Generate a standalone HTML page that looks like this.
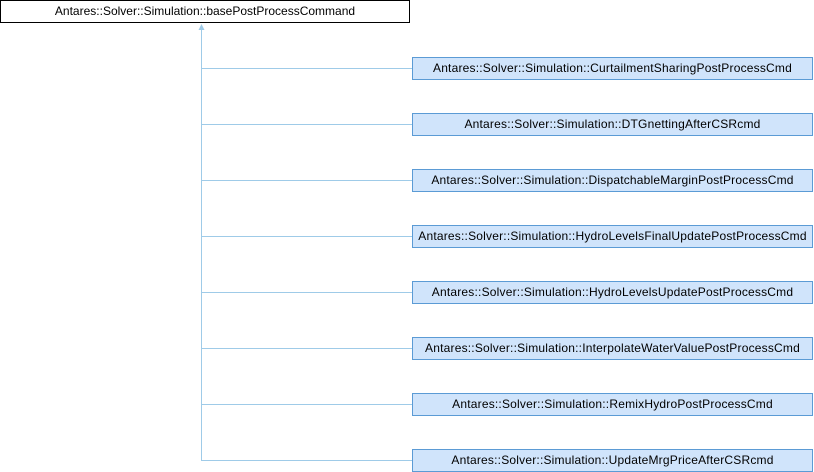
<!DOCTYPE html>
<html><head><meta charset="utf-8"><style>
html,body{margin:0;padding:0;background:#fff;width:814px;height:472px;overflow:hidden;position:relative}
.b{position:absolute;box-sizing:border-box;height:23px;font:12px "Liberation Sans",sans-serif;color:#000;text-align:center;line-height:21px;white-space:nowrap}
.top{left:0;top:0;width:410px;border:1px solid #000;background:#fff}
.c{left:412px;width:401px;border:1px solid #5b9bd5;background:#d0e4fb;letter-spacing:0.2px}
</style></head><body>
<svg width="814" height="472" style="position:absolute;left:0;top:0">
<g stroke="#9fcbe8" stroke-width="1" fill="none">
<line x1="201.5" y1="29" x2="201.5" y2="460"/>
<line x1="201" y1="68.5" x2="412" y2="68.5"/>
<line x1="201" y1="124.5" x2="412" y2="124.5"/>
<line x1="201" y1="180.5" x2="412" y2="180.5"/>
<line x1="201" y1="236.5" x2="412" y2="236.5"/>
<line x1="201" y1="292.5" x2="412" y2="292.5"/>
<line x1="201" y1="348.5" x2="412" y2="348.5"/>
<line x1="201" y1="404.5" x2="412" y2="404.5"/>
<line x1="201" y1="460.5" x2="412" y2="460.5"/>
</g>
<polygon points="201.5,24 198.5,30 204.5,30" fill="#9fcbe8"/>
</svg>
<div class="b top">Antares::Solver::Simulation::basePostProcessCommand</div>
<div class="b c" style="top:57px">Antares::Solver::Simulation::CurtailmentSharingPostProcessCmd</div>
<div class="b c" style="top:113px">Antares::Solver::Simulation::DTGnettingAfterCSRcmd</div>
<div class="b c" style="top:169px">Antares::Solver::Simulation::DispatchableMarginPostProcessCmd</div>
<div class="b c" style="top:225px">Antares::Solver::Simulation::HydroLevelsFinalUpdatePostProcessCmd</div>
<div class="b c" style="top:281px">Antares::Solver::Simulation::HydroLevelsUpdatePostProcessCmd</div>
<div class="b c" style="top:337px">Antares::Solver::Simulation::InterpolateWaterValuePostProcessCmd</div>
<div class="b c" style="top:393px">Antares::Solver::Simulation::RemixHydroPostProcessCmd</div>
<div class="b c" style="top:449px">Antares::Solver::Simulation::UpdateMrgPriceAfterCSRcmd</div>
</body></html>
